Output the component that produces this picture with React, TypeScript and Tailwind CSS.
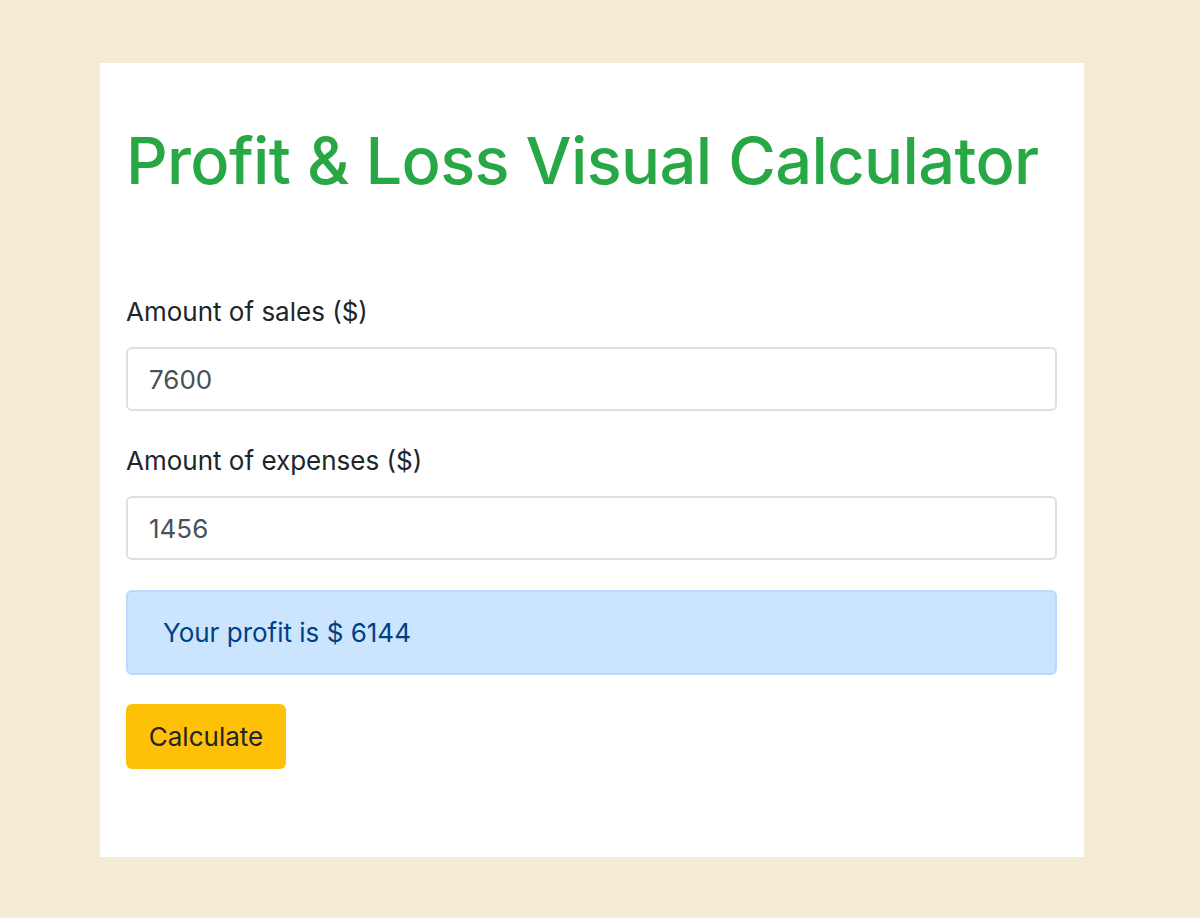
export default function App() {
  return (
    <div className="min-h-[918px] w-full bg-[#f5ecd6] pt-[63px] pl-[100px] font-['Inter',sans-serif]">
      <div className="w-[984px] h-[794px] bg-white px-[26px] pt-[59px]">
        <h1 className="text-[#28a745] text-[65px] leading-[1.2] font-medium whitespace-nowrap tracking-[-0.65px]">
          Profit &amp; Loss Visual Calculator
        </h1>
        <div className="mt-[92px]">
          <label className="block text-[26px] leading-[1.5] text-[#212529]">Amount of sales ($)</label>
          <input
            readOnly
            value="7600"
            className="mt-[16px] block w-[931px] h-[64px] rounded-[6px] border-2 border-[#dcdfe3] px-[21px] text-[26px] text-[#495057] outline-none"
          />
        </div>
        <div className="mt-[30px]">
          <label className="block text-[26px] leading-[1.5] text-[#212529]">Amount of expenses ($)</label>
          <input
            readOnly
            value="1456"
            className="mt-[16px] block w-[931px] h-[64px] rounded-[6px] border-2 border-[#dcdfe3] px-[21px] text-[26px] text-[#495057] outline-none"
          />
        </div>
        <div className="mt-[30px] w-[931px] h-[85px] rounded-[6px] border-2 border-[#b8daff] bg-[#cce5ff] px-[35px] flex items-center text-[26px] text-[#004085]">
          Your profit is $ 6144
        </div>
        <button className="mt-[29px] block h-[65px] w-[160px] rounded-[6px] bg-[#ffc107] text-[26px] text-[#212529]">
          Calculate
        </button>
      </div>
    </div>
  );
}
